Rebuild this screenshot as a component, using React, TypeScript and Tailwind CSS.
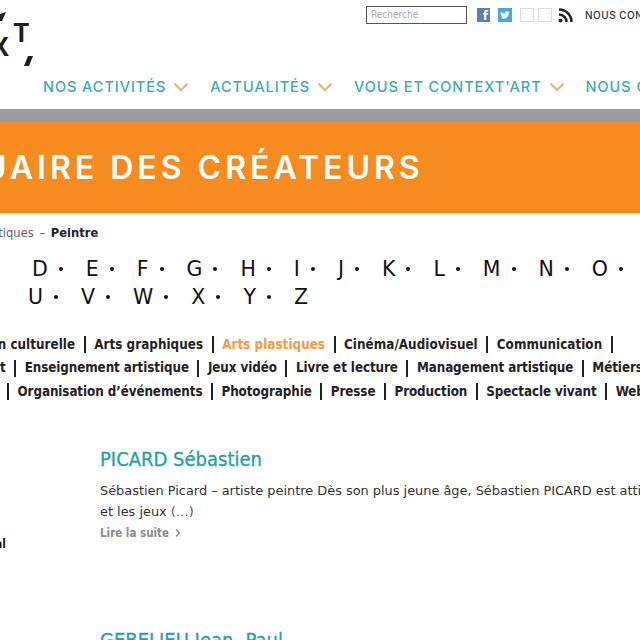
import { ChevronDown, ChevronRight } from 'lucide-react';

const navItems = ['NOS ACTIVITÉS', 'ACTUALITÉS', "VOUS ET CONTEXT'ART", 'NOUS CONNAÎTRE'];
const lettersTop = ['D', 'E', 'F', 'G', 'H', 'I', 'J', 'K', 'L', 'M', 'N', 'O', 'P'];
const lettersBottom = ['U', 'V', 'W', 'X', 'Y', 'Z'];
const categoryRows = [
  { offset: 'ml-[-37px] tracking-[0.05px]', items: ['Action culturelle', 'Arts graphiques', 'Arts plastiques', 'Cinéma/Audiovisuel', 'Communication'], trailing: true },
  { offset: 'ml-[-15px] tracking-[-0.08px]', items: ['Art', 'Enseignement artistique', 'Jeux vidéo', 'Livre et lecture', 'Management artistique', 'Métiers d’art'] },
  { offset: 'ml-[-38px] tracking-[-0.08px]', items: ['Mode', 'Organisation d’événements', 'Photographie', 'Presse', 'Production', 'Spectacle vivant', 'Web'] },
];

function LetterRow({ letters, lead }: { letters: string[]; lead: string }) {
  return (
    <div className={`flex items-center whitespace-nowrap h-[28px] ${lead}`}>
      {letters.map((letter, i) => (
        <span key={letter} className="flex items-center shrink-0">
          <span className="text-[20.500px] text-[#111]">{letter}</span>
          {i < letters.length - 1 && (
            <span className="ml-[11px] mr-[23px] w-[4px] h-[4px] rounded-full bg-[#111]" />
          )}
        </span>
      ))}
    </div>
  );
}

export default function App() {
  return (
    <div className="relative w-[640px] h-[640px] overflow-hidden bg-white font-['DejaVu_Sans',sans-serif] text-[#222]">
      {/* logo is cut by the window edge */}
      <div className="absolute left-0 top-0 w-[40px] h-[70px]">
        <svg viewBox="0 0 40 70" className="w-[40px] h-[70px] fill-[#1d1d1b]">
          <path d="M0 14 L6 12 L2 21 L0 21 Z" />
          <path d="M28 56 L33 56 L29 66 L24 66 Z" />
        </svg>
        <span className="absolute left-[13px] top-[18px] text-[25px] leading-[30px] font-['Inter',sans-serif] font-bold text-[#1d1d1b]">T</span>
        <span className="absolute left-[-9px] top-[32px] text-[25px] leading-[30px] font-['Inter',sans-serif] font-bold text-[#1d1d1b]">X</span>
      </div>

      <header className="h-[109px] flex flex-col">
        <div className="flex items-center shrink-0 h-[30px] ml-[366px] w-[400px]">
          <div className="shrink-0 w-[101px] h-[18px] border border-[#555] text-[10px] text-[#aaa] pl-[4px] leading-[15px] font-['DejaVu_Sans_Condensed',sans-serif]">
            Recherche
          </div>
          <div className="shrink-0 ml-[10px] w-[13px] h-[14px] bg-[#5b7fb5] text-white text-[12px] font-bold flex items-end justify-end pr-[2px] leading-none">
            f
          </div>
          <div className="shrink-0 ml-[8px] w-[14px] h-[14px] bg-[#4aa8e0] flex items-center justify-center">
            <svg viewBox="0 0 24 24" className="w-[10px] h-[10px] fill-white">
              <path d="M23 5c-.8.4-1.700.6-2.600.7.900-.6 1.600-1.400 2-2.500-.9.500-1.900.9-2.900 1.100A4.600 4.600 0 0 0 11.700 8.500C7.900 8.300 4.500 6.500 2.200 3.700c-1.200 2.100-.6 4.800 1.400 6.100-.7 0-1.400-.2-2.100-.6 0 2.200 1.600 4.200 3.700 4.600-.7.200-1.400.2-2.100.1.600 1.900 2.300 3.200 4.300 3.200A9.300 9.300 0 0 1 1 19c2.100 1.300 4.500 2 7 2 8.500 0 13.300-7.200 13-13.600.9-.7 1.600-1.500 2-2.400z" />
            </svg>
          </div>
          <div className="shrink-0 ml-[8px] w-[14px] h-[14px] border border-[#ddd]" />
          <div className="shrink-0 ml-[4px] w-[14px] h-[14px] border border-[#ddd]" />
          <svg viewBox="0 0 15 15" className="shrink-0 ml-[6px] w-[15px] h-[15px]">
            <circle cx="2.500" cy="12.500" r="2" fill="#222" />
            <path d="M1 6.500a7.500 7.500 0 0 1 7.500 7.500M1 1.500A12.500 12.500 0 0 1 13.500 14" fill="none" stroke="#222" strokeWidth="2.600" />
          </svg>
          <span className="shrink-0 ml-[12px] text-[10px] tracking-[0.5px] whitespace-nowrap font-['Inter',sans-serif] font-medium text-[#333]">
            NOUS CONTACTER
          </span>
        </div>
        <nav className="flex items-center mt-[45px] ml-[43px] whitespace-nowrap font-['Inter',sans-serif] font-medium text-[14.500px] tracking-[0.95px] text-[#38aeaa]">
          {navItems.map((item) => (
            <span key={item} className="flex items-center shrink-0 mr-[17px]">
              {item}
              <ChevronDown size={24} strokeWidth={1.800} className="ml-[3px] text-[#e9b06a]" />
            </span>
          ))}
        </nav>
      </header>

      <div className="h-[13px] bg-[#9b9c9e]" />
      <div className="h-[91px] bg-[#f68b1f] flex items-center overflow-hidden">
        <h1 className="ml-[-101px] text-[32px] font-['Inter',sans-serif] font-semibold tracking-[4px] text-white whitespace-nowrap">
          ANNUAIRE DES CRÉATEURS
        </h1>
      </div>

      <div className="mt-[11px] ml-[-52px] text-[12.800px] leading-[18px] whitespace-nowrap text-[#666] font-['DejaVu_Sans_Condensed',sans-serif]">
        Arts plastiques <span className="mx-[2px]">–</span> <span className="font-bold text-[#222]">Peintre</span>
      </div>

      <div className="mt-[13px]">
        <LetterRow letters={lettersTop} lead="ml-[32px]" />
        <LetterRow letters={lettersBottom} lead="ml-[28px]" />
      </div>

      <div className="mt-[22px] flex flex-col text-[13.300px] font-bold text-[#222] font-['DejaVu_Sans_Condensed',sans-serif]">
        {categoryRows.map((row) => (
          <div key={row.offset} className={`flex items-center h-[23.500px] whitespace-nowrap ${row.offset}`}>
            {row.items.map((item, i) => (
              <span key={item} className="flex items-center shrink-0">
                <span className={item === 'Arts plastiques' ? 'text-[#f39a45]' : ''}>{item}</span>
                {(i < row.items.length - 1 || row.trailing) && (
                  <span className="mx-[8.500px] w-[2px] h-[17px] bg-[#222]" />
                )}
              </span>
            ))}
          </div>
        ))}
      </div>

      <div className="flex mt-[40px]">
        <div className="w-[100px] shrink-0" />
        <section className="whitespace-nowrap">
          <h2 className="text-[20px] leading-[30px] text-[#1fa3a0] [-webkit-text-stroke:0.3px_#1fa3a0] font-['DejaVu_Sans_Condensed',sans-serif]">PICARD Sébastien</h2>
          <p className="mt-[6px] text-[12.900px] leading-[21px] text-[#333]">
            Sébastien Picard – artiste peintre Dès son plus jeune âge, Sébastien PICARD est attiré par le dessin
            <br />
            et les jeux <span className="text-[#555]">(…)</span>
          </p>
          <div className="mt-[1px] flex items-center text-[11.500px] leading-[21px] font-bold text-[#8c8c8c] font-['DejaVu_Sans_Condensed',sans-serif]">
            Lire la suite
            <ChevronRight size={12} strokeWidth={3} className="ml-[3px]" />
          </div>
          <h2 className="mt-[81px] text-[20px] leading-[30px] text-[#1fa3a0] [-webkit-text-stroke:0.3px_#1fa3a0] font-['DejaVu_Sans_Condensed',sans-serif]">GEBELIEU Jean- Paul</h2>
        </section>
      </div>

      {/* sidebar label cut by the window edge */}
      <span className="absolute left-[-60px] top-[535px] w-[66px] text-right text-[12px] font-bold text-[#111] font-['DejaVu_Sans_Condensed',sans-serif]">
        Pascal
      </span>
    </div>
  );
}
